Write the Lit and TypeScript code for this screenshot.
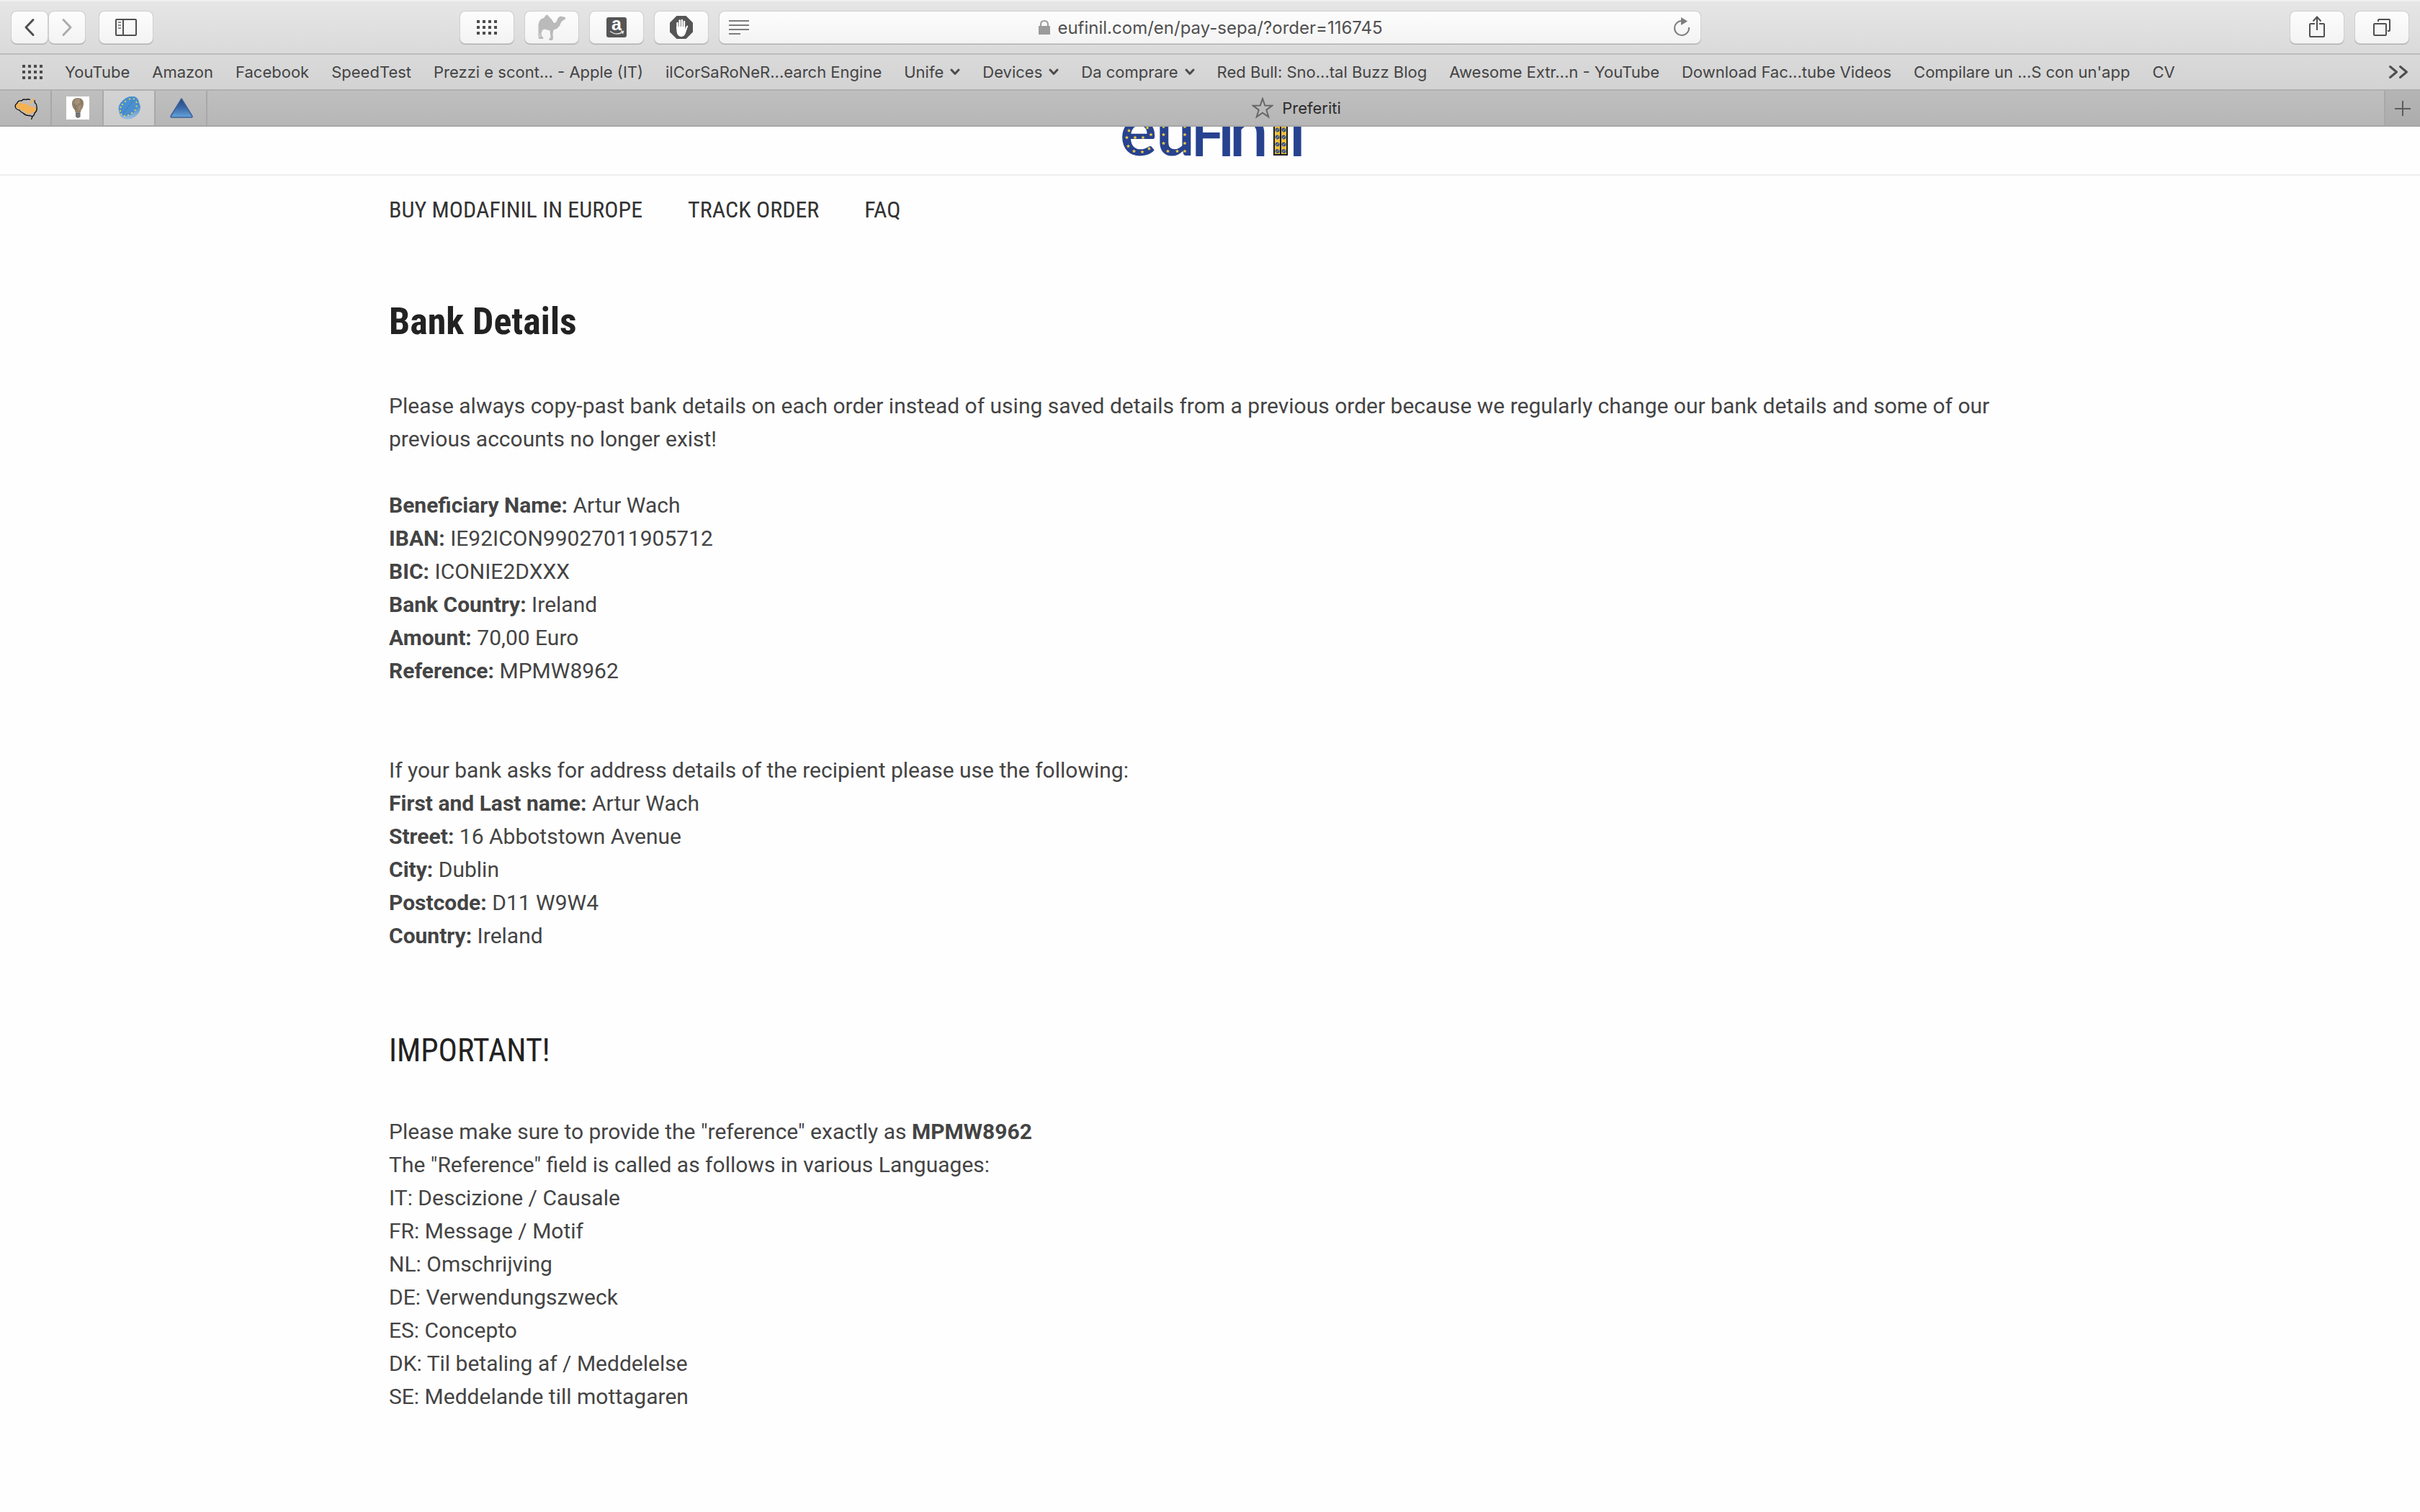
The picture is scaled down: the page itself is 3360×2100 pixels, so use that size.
import { LitElement, html, svg, css } from "lit";
import { customElement } from "lit/decorators.js";

interface Bookmark {
  label: string;
  folder?: boolean;
}

const BOOKMARKS: Bookmark[] = [
  { label: "YouTube" },
  { label: "Amazon" },
  { label: "Facebook" },
  { label: "SpeedTest" },
  { label: "Prezzi e scont... - Apple (IT)" },
  { label: "ilCorSaRoNeR...earch Engine" },
  { label: "Unife", folder: true },
  { label: "Devices", folder: true },
  { label: "Da comprare", folder: true },
  { label: "Red Bull: Sno...tal Buzz Blog" },
  { label: "Awesome Extr...n - YouTube" },
  { label: "Download Fac...tube Videos" },
  { label: "Compilare un ...S con un'app" },
  { label: "CV" },
];

const starPoints = (cx: number, cy: number, r: number, inner = 0.4) =>
  Array.from({ length: 10 }, (_, i) => {
    const a = (Math.PI / 5) * i - Math.PI / 2;
    const d = i % 2 ? r * inner : r;
    return `${(cx + d * Math.cos(a)).toFixed(2)},${(cy + d * Math.sin(a)).toFixed(2)}`;
  }).join(" ");

const dotGrid = html`<svg width="28" height="20" viewBox="0 0 28 20" fill="#4c4c4c" aria-hidden="true">
  ${[0, 8, 16, 24].map((x) => [0, 8, 16].map((y) => svg`<rect x=${x} y=${y} width="4" height="4"/>`))}
</svg>`;

const chevronDown = html`<svg width="14" height="10" viewBox="0 0 14 10" fill="none" stroke="#4c4c4c" stroke-width="3" stroke-linecap="round" stroke-linejoin="round" aria-hidden="true"><path d="M2 2l5 5.500l5-5.500"/></svg>`;

@customElement("browser-toolbar")
class BrowserToolbar extends LitElement {
  static styles = css`
    :host {
      display: block;
      font-family: Inter, "Liberation Sans", sans-serif;
    }
    .bar {
      display: grid;
      grid-template-columns: minmax(max-content, 1fr) minmax(0, 1362px) minmax(max-content, 1fr);
      align-items: center;
      height: 76px;
      padding: 0 16px;
      box-sizing: border-box;
      border-top: 2px solid #f0f0f0;
      border-bottom: 2px solid #bdbdbd;
      background: linear-gradient(#e6e6e6, #dadada);
    }
    .side {
      display: flex;
      align-items: center;
      gap: 16px;
    }
    .left {
      padding-right: 16px;
    }
    .history {
      display: flex;
      gap: 2px;
      margin-right: 4px;
    }
    .spread {
      margin-left: auto;
    }
    button {
      display: grid;
      place-items: center;
      padding: 0;
      border: 0;
      background: none;
      font: inherit;
    }
    .key {
      width: 74px;
      height: 44px;
      border-radius: 7px;
      background: linear-gradient(#fdfdfd, #f3f3f3);
      box-shadow: 0 0 0 1px #cfcfcf, 0 1px 0 1px #b0b0b0;
    }
    .small {
      width: 50px;
    }
    .address {
      display: grid;
      grid-template-columns: 54px 1fr 52px;
      align-items: center;
      height: 44px;
      border-radius: 7px;
      background: linear-gradient(#fdfdfd, #f3f3f3);
      box-shadow: 0 0 0 1px #cfcfcf, 0 1px 0 1px #b0b0b0;
    }
    .location {
      display: flex;
      justify-content: center;
      align-items: center;
      gap: 10px;
    }
    .url {
      field-sizing: content;
      padding: 1px 0 0;
      border: 0;
      outline: 0;
      background: none;
      color: #505050;
      font: 24px/32px Inter, "Liberation Sans", sans-serif;
    }
    svg {
      display: block;
    }
    .letter {
      overflow: visible;
      font: 700 25px "Liberation Sans", sans-serif;
    }
  `;

  render() {
    return html`<div class="bar">
      <div class="side left">
        <div class="history">
          <button class="key small" aria-label="Back">
            <svg width="24" height="28" viewBox="29 24 24 28" fill="none" stroke="#4f4f4f" stroke-width="3" stroke-linecap="round" stroke-linejoin="round"><path d="M46 27.500L36 38L46 48.500"/></svg>
          </button>
          <button class="key small" aria-label="Forward">
            <svg width="24" height="28" viewBox="81 24 24 28" fill="none" stroke="#ababab" stroke-width="3" stroke-linecap="round" stroke-linejoin="round"><path d="M88 27.500L98 38L88 48.500"/></svg>
          </button>
        </div>
        <button class="key" aria-label="Sidebar">
          <svg width="30" height="24" viewBox="0 0 30 24" fill="none" stroke="#4f4f4f" stroke-width="2"><rect x="1" y="1" width="28" height="22" rx="1"/><path d="M11 1V23"/><path d="M4 5H8M4 9H8M4 13H8" stroke="#8a8a8a"/></svg>
        </button>
        <button class="key spread" aria-label="Top sites">${dotGrid}</button>
        <button class="key" aria-label="Camel price tracker">
          <svg width="40" height="38" viewBox="746 19 40 38" fill="#bababa"><path d="M758 21L760 20.500L763 24L766 27L769 32L772 31L775 24.500L778 22.500L785 24L785 26.500L781 29L779 31L777 36L773 40L768.500 41.500L767.500 47L768 53L767 56L763 56L762 54L764.500 52L763.500 42.500L756 40.500L753 42L751.500 46L752 50L755 53L753 54L748.500 54L747.500 52L750 51L749 45L749 52L747.500 51L747.500 34L749 29L752 26L755 25Z"/></svg>
        </button>
        <button class="key" aria-label="Amazon assistant">
          <svg class="letter" width="28" height="28" viewBox="842 24 28 28"><rect x="842" y="24" width="28" height="28" rx="3" fill="#555"/><text x="856" y="42" text-anchor="middle" fill="#fff">a</text><path d="M847 43.500Q856 50 864.500 44.500M862 43.500L865.500 43.500L864.500 47" fill="none" stroke="#ddd" stroke-width="1.500"/></svg>
        </button>
        <button class="key" aria-label="Content blocker">
          <svg width="32" height="32" viewBox="930 22 32 32"><path d="M939.500 22H952.500L962 31.500V44.500L952.500 54H939.500L930 44.500V31.500Z" fill="#555"/><path d="M940.500 40V32M943.700 38V28.500M946.900 38V28M950 39V30" stroke="#fff" stroke-width="2.400" stroke-linecap="round"/><path d="M939.300 37H951.200V40.500L953 36.500Q954.200 34.800 955.300 36L952.500 44Q951 51 946 51Q940.500 51 939.500 44Z" fill="#fff"/></svg>
        </button>
      </div>
      <div class="address">
        <button aria-label="Reader view">
          <svg width="28" height="20" viewBox="0 0 28 20" stroke="#7d7d7d" stroke-width="2"><path d="M0 1H28M0 7H28M0 13H28M0 19H16"/></svg>
        </button>
        <label class="location">
          <svg width="16" height="20" viewBox="0 0 16 20" role="img" aria-label="Secure address"><rect y="8" width="16" height="12" fill="#9b9b9b"/><path d="M3 9V6Q3 1 8 1Q13 1 13 6V9" fill="none" stroke="#9b9b9b" stroke-width="2"/></svg>
          <input class="url" type="text" value="eufinil.com/en/pay-sepa/?order=116745" />
        </label>
        <button aria-label="Reload">
          <svg width="24" height="28" viewBox="2325 24 24 28"><path d="M2337 29A10 10 0 1 0 2347 38" fill="none" stroke="#7d7d7d" stroke-width="2"/><path d="M2336 24L2345 29.500L2336 35Z" fill="#7d7d7d"/></svg>
        </button>
      </div>
      <div class="side">
        <button class="key spread" aria-label="Share">
          <svg width="24" height="32" viewBox="3205 22 24 32" fill="none" stroke="#4f4f4f" stroke-width="2"><path d="M3214 33H3208Q3207 33 3207 34V50Q3207 51 3208 51H3226Q3227 51 3227 50V34Q3227 33 3226 33H3220M3217 42V24M3211.500 29.500L3217 23.500L3222.500 29.500"/></svg>
        </button>
        <button class="key" aria-label="Show all tabs">
          <svg width="26" height="26" viewBox="3294 25 26 26" fill="none" stroke="#4f4f4f" stroke-width="2"><rect x="3296" y="33" width="17" height="16" rx="1"/><path d="M3302 30V28Q3302 27 3303 27H3317Q3318 27 3318 28V42Q3318 43 3317 43H3315"/></svg>
        </button>
      </div>
    </div>`;
  }
}

@customElement("bookmarks-bar")
class BookmarksBar extends LitElement {
  static styles = css`
    :host {
      display: block;
    }
    .bar {
      display: flex;
      align-items: center;
      gap: 31px;
      height: 50px;
      box-sizing: border-box;
      padding: 0 16px 0 31px;
      border-bottom: 2px solid #b0b0b0;
      background: linear-gradient(#dadada, #d3d3d3);
    }
    .item {
      display: flex;
      align-items: center;
      gap: 9px;
      padding: 0;
      border: 0;
      background: none;
      color: #444;
      font: 22px/28px Inter, "Liberation Sans", sans-serif;
      text-decoration: none;
      white-space: nowrap;
    }
    .more {
      margin-left: auto;
    }
    svg {
      display: block;
    }
  `;

  render() {
    return html`<nav class="bar" aria-label="Bookmarks">
      <button class="item" aria-label="Show favourites">${dotGrid}</button>
      ${BOOKMARKS.map((b) =>
        b.folder
          ? html`<button class="item">${b.label}${chevronDown}</button>`
          : html`<a class="item" href="#">${b.label}</a>`
      )}
      <button class="item more" aria-label="More bookmarks">
        <svg width="28" height="20" viewBox="3317 90 28 20" fill="none" stroke="#4f4f4f" stroke-width="3" stroke-linecap="round" stroke-linejoin="round"><path d="M3319.500 92.500L3328.500 100L3319.500 107.500M3333.500 92.500L3342.500 100L3333.500 107.500"/></svg>
      </button>
    </nav>`;
  }
}

const brainIcon = html`<svg width="32" height="32" viewBox="20 134 32 32"><path d="M21.500 146L26.500 142.500L33 144L39 144.500L40.500 147.500L45 148L50 150L49 155L45 157L38 158.500L33 154.500L25 151ZM46 136.500L47.500 137.500L44.500 143L40.500 144.500L43 140.500Z" fill="#f5b254"/><path d="M42 138.500Q38 137 36 138.500Q32 137 30 140Q25 139 24 143Q20 146 21.500 149Q22 152 27 153Q29 156 32 157Q36 161 41 160.500L45 162L43.500 166M45 162Q48 160 48 157Q52 154 51 149Q51 144 48.500 143L48 139" fill="none" stroke="#0c0c0c" stroke-width="1.300"/></svg>`;

const bulbIcon = html`<svg width="32" height="32" viewBox="0 0 32 32"><rect width="32" height="32" fill="#fff"/><path d="M16 2Q24 2 24 10Q24 15 20.500 19L20 22H12.500L12 19Q8 15 8 10Q8 2 16 2Z" fill="#94826a"/><path d="M13 4L18 3L20 8L15 12L11 9ZM16 14L20 12L20 17L17 20Z" fill="#a3917a"/><path d="M9 10L13 14L13 19M20 4L22 11" stroke="#7d6d58" fill="none"/><path d="M13 22H19.500V28L17.500 30H15L13 28Z" fill="#85878a"/><path d="M13 24H19.500M13 27H19.500" stroke="#4c4e52"/></svg>`;

const pillIcon = html`<svg width="32" height="32" viewBox="165 134 32 32">
  <defs><linearGradient id="pill-side" x1="0" y1="0" x2="0" y2="1"><stop offset="0.300" stop-color="#3f86cb"/><stop offset="1" stop-color="#98bedf"/></linearGradient></defs>
  <path d="M165.500 152Q165 146 171 140Q178 133 186 134Q192 136 193.500 141L196 148Q196 155 191 160Q185 166 177 165.500Q170 165 167.500 160Z" fill="url(#pill-side)"/>
  <ellipse cx="180" cy="147.500" rx="16" ry="11" transform="rotate(-44 180 147.500)" fill="#4a8fd0"/>
  <path d="M171 158L189 137" stroke="#3a7cba"/>
  ${[[168, 154], [168.500, 149], [171, 145], [175, 141], [181, 137.500], [187, 137.500], [190.500, 142], [190.500, 147.500], [188.500, 153], [184, 157], [179, 160], [174, 161], [169.500, 158.500]].map(
    ([x, y]) => svg`<circle cx=${x} cy=${y} r="1.100" fill="#f0e23a"/>`
  )}
</svg>`;

const triangleIcon = html`<svg width="32" height="32" viewBox="236 134 32 32">
  <defs><linearGradient id="tri" x1="0" y1="0" x2="0" y2="1"><stop offset="0" stop-color="#26427a"/><stop offset="0.500" stop-color="#3a6aa8"/><stop offset="1" stop-color="#67a5dc"/></linearGradient></defs>
  <path d="M252 137L267 161.500Q267 163 266 163H238Q237 163 237 161.500Z" fill="url(#tri)" stroke="#3a5f98" stroke-width="1.500" stroke-linejoin="round"/>
</svg>`;

@customElement("tab-strip")
class TabStrip extends LitElement {
  static styles = css`
    :host {
      display: block;
    }
    .strip {
      display: flex;
      height: 50px;
      box-sizing: border-box;
      border-bottom: 2px solid #a6a6a6;
      background: linear-gradient(#bfbfbf, #b6b6b6);
    }
    .tab {
      display: flex;
      align-items: center;
      justify-content: center;
      gap: 12px;
      flex: none;
      width: 72px;
      padding: 0;
      border: 0;
      background: none;
      box-shadow: inset -2px 0 #a8a8a8;
      color: #2c2c2c;
      font: 22px/28px Inter, "Liberation Sans", sans-serif;
    }
    .active {
      background: linear-gradient(#d3d3d3, #cccccc);
    }
    .wide {
      flex: 1;
    }
    .add {
      width: 48px;
      background: linear-gradient(#b5b5b5, #acacac);
      box-shadow: none;
    }
    svg {
      display: block;
    }
  `;

  render() {
    return html`<div class="strip">
      <button class="tab" aria-label="Pinned: brain">${brainIcon}</button>
      <button class="tab" aria-label="Pinned: bulb">${bulbIcon}</button>
      <button class="tab active" aria-label="Pinned: eufinil">${pillIcon}</button>
      <button class="tab" aria-label="Pinned: triangle">${triangleIcon}</button>
      <button class="tab wide">
        <svg width="30" height="30" viewBox="1 1 30 30"><polygon points=${starPoints(16, 17, 14)} fill="none" stroke="#666" stroke-width="2"/></svg>
        <span>Preferiti</span>
      </button>
      <button class="tab add" aria-label="New tab">
        <svg width="22" height="22" viewBox="0 0 22 22" stroke="#5c5c5c" stroke-width="2"><path d="M0 12H22M11 1V22"/></svg>
      </button>
    </div>`;
  }
}

const LOGO_STARS = [
  [1567.500, 181.500], [1593, 177.500], [1598, 187], [1587, 191], [1576, 191], [1564.500, 191], [1566.500, 203], [1574.500, 210], [1586, 211], [1595.500, 206.500],
  [1615.500, 176], [1615.500, 187], [1615.500, 199], [1621.500, 210], [1634.500, 210], [1645, 210], [1645, 199], [1645, 187], [1645, 176],
];

@customElement("site-header")
class SiteHeader extends LitElement {
  static styles = css`
    :host {
      display: block;
      font-family: "Roboto Condensed", "Liberation Sans Narrow", "Liberation Sans", sans-serif;
    }
    .brand {
      display: flex;
      justify-content: center;
      border-bottom: 2px solid #eeeeee;
    }
    .logo {
      display: block;
      overflow: hidden;
    }
    .word {
      font: 700 96px Lato, sans-serif;
      fill: #27428f;
    }
    .thin {
      font-weight: 400;
      stroke: #27428f;
      stroke-width: 2px;
    }
    .cap {
      font-size: 80px;
    }
    .menu {
      display: flex;
      gap: 63px;
      max-width: 2280px;
      margin: 0 auto;
    }
    .link {
      color: #333;
      font-size: 32px;
      line-height: 94px;
      text-decoration: none;
    }
  `;

  render() {
    return html`<header>
      <div class="brand">
        <a href="#" aria-label="eufinil">
          <svg class="logo" width="280" height="66" viewBox="1540 176 280 66">
            <text class="word" y="215.500" x="1555 1605">eu<tspan class="thin cap" x="1654">F</tspan><tspan class="thin" x="1691 1707 1790">ınl</tspan></text>
            <rect x="1769" y="160" width="18" height="55" fill="#f4c23a" stroke="#1a1a1a" stroke-width="2"/>
            <path d="M1778 160V215" stroke="#1a1a1a" stroke-width="2"/>
            ${[180.500, 190.500, 200.500, 210].map((y) =>
              [1773.500, 1782.500].map(
                (x) => svg`<circle cx=${x} cy=${y} r="3" fill="#34548c"/><path d="M${x - 2} ${y + 2}l4 -4" stroke="#c8b060"/>`
              )
            )}
            ${LOGO_STARS.map(([x, y]) => svg`<polygon points=${starPoints(x, y, 2.8, 0.45)} fill="#f4d03a"/>`)}
          </svg>
        </a>
      </div>
      <nav class="menu">
        <a class="link" href="#">BUY MODAFINIL IN EUROPE</a>
        <a class="link" href="#">TRACK ORDER</a>
        <a class="link" href="#">FAQ</a>
      </nav>
    </header>`;
  }
}

const ACCOUNT = [
  ["Beneficiary Name:", "Artur Wach"],
  ["IBAN:", "IE92ICON99027011905712"],
  ["BIC:", "ICONIE2DXXX"],
  ["Bank Country:", "Ireland"],
  ["Amount:", "70,00 Euro"],
  ["Reference:", "MPMW8962"],
];

const RECIPIENT = [
  ["First and Last name:", "Artur Wach"],
  ["Street:", "16 Abbotstown Avenue"],
  ["City:", "Dublin"],
  ["Postcode:", "D11 W9W4"],
  ["Country:", "Ireland"],
];

const LANGUAGES = [
  "IT: Descizione / Causale",
  "FR: Message / Motif",
  "NL: Omschrijving",
  "DE: Verwendungszweck",
  "ES: Concepto",
  "DK: Til betaling af / Meddelelse",
  "SE: Meddelande till mottagaren",
];

@customElement("bank-details")
class BankDetails extends LitElement {
  static styles = css`
    :host {
      display: block;
      color: #444;
      font: 30px/46px Roboto, "Liberation Sans", sans-serif;
    }
    .content {
      max-width: 2280px;
      margin: 0 auto;
      padding: 77px 0 138px;
    }
    .title,
    .subtitle {
      color: #222;
      font-family: "Roboto Condensed", "Liberation Sans Narrow", "Liberation Sans", sans-serif;
    }
    .title {
      margin: 0 0 62px;
      font-size: 52px;
      font-weight: 700;
      line-height: 64px;
    }
    .subtitle {
      margin: 108px 0 62px;
      font-size: 44px;
      font-weight: 400;
      line-height: 56px;
    }
    .text,
    .list {
      margin: 0;
      padding: 0;
      list-style: none;
    }
    .account {
      margin: 46px 0 92px;
    }
    .term,
    .value {
      display: inline;
      margin: 0;
    }
    .term,
    .strong {
      font-weight: 700;
    }
  `;

  private rows(items: string[][]) {
    return items.map(
      ([term, value]) => html`<div><dt class="term">${term}</dt> <dd class="value">${value}</dd></div>`
    );
  }

  render() {
    return html`<main class="content">
      <h1 class="title">Bank Details</h1>
      <p class="text">Please always copy-past bank details on each order instead of using saved details from a previous order because we regularly change our bank details and some of our previous accounts no longer exist!</p>
      <dl class="account">${this.rows(ACCOUNT)}</dl>
      <p class="text">If your bank asks for address details of the recipient please use the following:</p>
      <dl class="list">${this.rows(RECIPIENT)}</dl>
      <h2 class="subtitle">IMPORTANT!</h2>
      <p class="text">Please make sure to provide the "reference" exactly as <strong class="strong">MPMW8962</strong></p>
      <p class="text">The "Reference" field is called as follows in various Languages:</p>
      <ul class="list">${LANGUAGES.map((l) => html`<li>${l}</li>`)}</ul>
    </main>`;
  }
}

@customElement("app-root")
class AppRoot extends LitElement {
  static styles = css`
    :host {
      display: block;
      min-height: 100vh;
      background: #fefefe;
    }
  `;

  render() {
    return html`
      <browser-toolbar></browser-toolbar>
      <bookmarks-bar></bookmarks-bar>
      <tab-strip></tab-strip>
      <site-header></site-header>
      <bank-details></bank-details>
    `;
  }
}
